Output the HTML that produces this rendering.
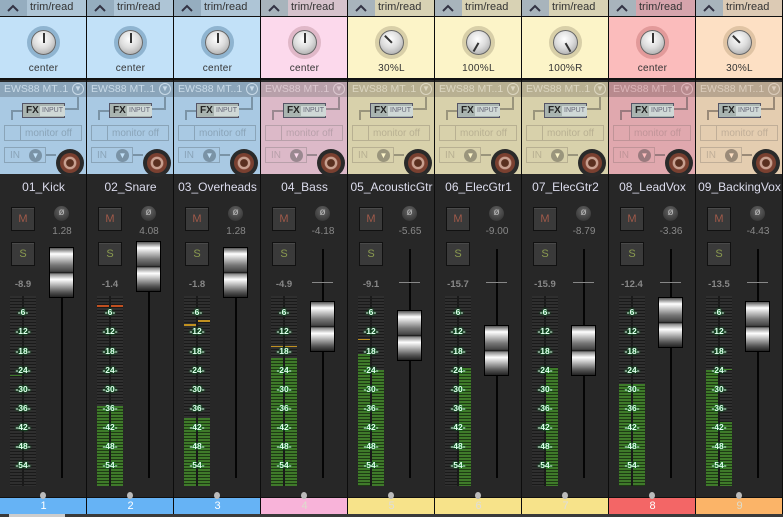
<!DOCTYPE html>
<html><head><meta charset="utf-8"><style>
*{margin:0;padding:0;box-sizing:border-box}
body{width:783px;height:517px;background:#222;overflow:hidden;position:relative;font-family:"Liberation Sans","DejaVu Sans",sans-serif}
.ch{position:absolute;top:0;width:87px;height:517px;background:#272727;border-right:1px solid #0c0c0c;overflow:hidden}
.tb{position:absolute;left:0;top:0;width:87px;height:17px;background:var(--tb);border-bottom:1px solid #111}
.ti{position:absolute;left:0;top:0;width:27px;height:16px;background:var(--ti)}
.tb span{position:absolute;left:30px;top:1px;font-size:11px;color:#333}
.pan{position:absolute;left:0;top:17px;width:87px;height:63px;background:var(--pan);border-bottom:2px solid #111}
.ring{position:absolute;left:27px;top:9px;width:33px;height:33px;border-radius:50%;border:4px solid var(--ring)}
.knob{position:absolute;left:31px;top:13px;width:25px;height:25px;border-radius:50%;background:radial-gradient(circle at 45% 35%,#fff,#ddd 45%,#999);border:1px solid #666}
.knob i{position:absolute;left:11px;top:2px;width:1.5px;height:10px;background:#333;transform-origin:50% 10px}
.pl{position:absolute;left:0;width:87px;top:46px;text-align:center;font-size:10px;color:#333;letter-spacing:.3px}
.rt{position:absolute;left:0;top:82px;width:87px;height:92px;background:var(--rt)}
.rh{position:absolute;left:0;top:0;width:87px;height:15px;background:var(--rh);color:var(--rht);font-size:10.5px;padding:1px 0 0 4px;white-space:nowrap}
.rh b{position:absolute;right:3px;top:1px;width:12px;height:12px;border-radius:50%;border:1.5px solid var(--rht);font-size:8px;line-height:10px;text-align:center;color:var(--rht)}
.fx{position:absolute;left:22px;top:21px;width:43px;height:15px;background:#a9b4b0;border:1px solid #556;font-size:10px;font-weight:bold;color:#222;padding-left:3px;line-height:13px}
.fx span{position:absolute;left:17px;top:2px;height:10px;padding:0 2px;background:#cfd8d6;font-size:7px;color:#667;font-weight:normal;line-height:10px}
.ar1{position:absolute;left:65px;top:15px;width:14px;height:13px;border-right:2px solid var(--ar);border-bottom:2px solid var(--ar)}
.ar2{position:absolute;left:11px;top:28px;width:11px;height:10px;border-left:2px solid var(--ar);border-top:2px solid var(--ar)}
.mo{position:absolute;left:4px;top:43px;width:78px;height:16px;border:1px solid var(--ln);color:var(--lt);font-size:10px;padding:1px 0 0 20px;line-height:13px}
.mo:before{content:"";position:absolute;left:15px;top:0;height:14px;border-left:1px solid var(--ln)}
.in{position:absolute;left:4px;top:65px;width:42px;height:16px;border:1px solid var(--ln);color:var(--lt);font-size:10px;padding:1px 0 0 5px;line-height:13px}
.in b{position:absolute;left:24px;top:1px;width:13px;height:13px;border-radius:50%;background:var(--ar);color:var(--pan);font-size:8px;line-height:13px;text-align:center}
.in2{position:absolute;left:46px;top:72px;width:10px;border-top:2px solid var(--ar)}
.rec{position:absolute;left:56px;top:67px;width:28px;height:28px;border-radius:50%;background:#2a2a2a}
.rec:after{content:"";position:absolute;left:4px;top:4px;width:20px;height:20px;border-radius:50%;background:radial-gradient(circle,#5a3020 25%,#c8a090 30%,#c8a090 42%,#7a4030 48%);}
.nm{position:absolute;left:0;top:180px;width:87px;text-align:center;font-size:12px;color:#dde;white-space:nowrap}
.m,.s{position:absolute;left:11px;width:24px;height:24px;background:#3a3a3a;border:1px solid #111;box-shadow:inset 0 1px 0 #4a4a4a;font-size:11px;text-align:center;line-height:22px}
.m{top:207px;color:#a05a4a}.s{top:242px;color:#8a9a50}
.ph{position:absolute;left:54px;top:206px;width:15px;height:15px;border-radius:50%;background:radial-gradient(circle at 50% 35%,#666,#2a2a2a);color:#bbb;font-size:10px;text-align:center;line-height:14px}
.vol{position:absolute;left:40px;top:226px;width:44px;text-align:center;font-size:10px;color:#888}
.pk{position:absolute;left:5px;top:279px;width:36px;text-align:center;font-size:9.5px;color:#888;font-weight:bold}
.mt{position:absolute;left:10px;top:296px;width:26px;height:190px;background:repeating-linear-gradient(#2f2f2f 0 2px,#1a1a1a 2px 3px)}
.mt:before{content:"";position:absolute;left:12px;top:0;height:190px;border-left:2px solid #1a1a1a;z-index:2}
.g{position:absolute;bottom:0;background:repeating-linear-gradient(#3f7a2a 0 2px,#1e3a14 2px 3px)}
.gl{left:0;width:12px}.gr{left:14px;width:12px}
.lb{position:absolute;left:5px;width:36px;text-align:center;font-size:8.5px;font-weight:bold;color:#e4fff0;text-shadow:0 0 2px #0a3,0 0 1px #000;z-index:3}
.trk{position:absolute;left:61px;top:249px;height:229px;border-left:2px solid #050505}
.zd{position:absolute;left:51px;top:282px;width:21px;border-top:1px solid #888}
.th{position:absolute;left:49px;width:25px;height:51px;border:1px solid #000;background:linear-gradient(#555,#fff 12%,#ddd 18%,#777 35%,#444 48%,#111 50%,#888 53%,#fff 64%,#ccc 72%,#555 90%,#222)}
.ft{position:absolute;left:0;top:497px;width:87px;height:17px;background:var(--bt);text-align:center;color:var(--bn);font-size:11px;line-height:17px;border-top:1px solid #111}
.dot{position:absolute;left:40px;top:492px;width:6px;height:7px;border-radius:50%;background:#bbb;z-index:2}
.bb{position:absolute;left:0;top:514px;width:783px;height:3px;background:#3a3a3a}
</style></head><body>

<div class="ch" style="left:0;--tb:#aec5d6;--ti:#95adbf;--pan:#c2e1f8;--ring:#8fb4d0;--rt:#a9c9e3;--rh:#8ba5ba;--rht:#c8dae8;--ar:#7a93a6;--ln:#8aa4b8;--lt:#8aa4b8;--bt:#66b3f5;--bn:#fff">
<div class="tb"><div class="ti"><svg width="27" height="16"><path d="M8 11l5-5 5 5" stroke="#334" stroke-width="2" fill="none"/></svg></div><span>trim/read</span></div>
<div class="pan"><div class="ring"></div><div class="knob"><i></i></div><div class="pl">center</div></div>
<div class="rt"><div class="rh">EWS88 MT..1<b>▼</b></div><div class="ar1"></div><div class="ar2"></div><div class="fx">FX<span>INPUT</span></div><div class="mo">monitor off</div><div class="in">IN<b>▼</b></div><div class="in2"></div><div class="rec"></div></div>
<div class="nm">01_Kick</div><div class="m">M</div><div class="ph">ø</div><div class="vol">1.28</div><div class="s">S</div><div class="pk">-8.9</div>
<div class="mt"><div class="g gl" style="height:1px;bottom:110px"></div></div>
<div class="lb" style="top:307px">-6-</div><div class="lb" style="top:326px">-12-</div><div class="lb" style="top:346px">-18-</div><div class="lb" style="top:365px">-24-</div><div class="lb" style="top:384px">-30-</div><div class="lb" style="top:403px">-36-</div><div class="lb" style="top:422px">-42-</div><div class="lb" style="top:441px">-48-</div><div class="lb" style="top:460px">-54-</div>
<div class="trk"></div><div class="th" style="top:247px"></div><div class="dot"></div><div class="ft">1</div></div>

<div class="ch" style="left:87px;--tb:#aec5d6;--ti:#95adbf;--pan:#c2e1f8;--ring:#8fb4d0;--rt:#a9c9e3;--rh:#8ba5ba;--rht:#c8dae8;--ar:#7a93a6;--ln:#8aa4b8;--lt:#8aa4b8;--bt:#66b3f5;--bn:#fff">
<div class="tb"><div class="ti"><svg width="27" height="16"><path d="M8 11l5-5 5 5" stroke="#334" stroke-width="2" fill="none"/></svg></div><span>trim/read</span></div>
<div class="pan"><div class="ring"></div><div class="knob"><i></i></div><div class="pl">center</div></div>
<div class="rt"><div class="rh">EWS88 MT..1<b>▼</b></div><div class="ar1"></div><div class="ar2"></div><div class="fx">FX<span>INPUT</span></div><div class="mo">monitor off</div><div class="in">IN<b>▼</b></div><div class="in2"></div><div class="rec"></div></div>
<div class="nm">02_Snare</div><div class="m">M</div><div class="ph">ø</div><div class="vol">4.08</div><div class="s">S</div><div class="pk">-1.4</div>
<div class="mt"><div class="g gl" style="height:80px"></div><div class="g gr" style="height:80px"></div><div style="position:absolute;left:0;top:9px;width:26px;border-top:2px solid #c05020"></div></div>
<div class="lb" style="top:307px">-6-</div><div class="lb" style="top:326px">-12-</div><div class="lb" style="top:346px">-18-</div><div class="lb" style="top:365px">-24-</div><div class="lb" style="top:384px">-30-</div><div class="lb" style="top:403px">-36-</div><div class="lb" style="top:422px">-42-</div><div class="lb" style="top:441px">-48-</div><div class="lb" style="top:460px">-54-</div>
<div class="trk"></div><div class="th" style="top:241px"></div><div class="dot"></div><div class="ft">2</div></div>

<div class="ch" style="left:174px;--tb:#aec5d6;--ti:#95adbf;--pan:#c2e1f8;--ring:#8fb4d0;--rt:#a9c9e3;--rh:#8ba5ba;--rht:#c8dae8;--ar:#7a93a6;--ln:#8aa4b8;--lt:#8aa4b8;--bt:#66b3f5;--bn:#fff">
<div class="tb"><div class="ti"><svg width="27" height="16"><path d="M8 11l5-5 5 5" stroke="#334" stroke-width="2" fill="none"/></svg></div><span>trim/read</span></div>
<div class="pan"><div class="ring"></div><div class="knob"><i></i></div><div class="pl">center</div></div>
<div class="rt"><div class="rh">EWS88 MT..1<b>▼</b></div><div class="ar1"></div><div class="ar2"></div><div class="fx">FX<span>INPUT</span></div><div class="mo">monitor off</div><div class="in">IN<b>▼</b></div><div class="in2"></div><div class="rec"></div></div>
<div class="nm">03_Overheads</div><div class="m">M</div><div class="ph">ø</div><div class="vol">1.28</div><div class="s">S</div><div class="pk">-1.8</div>
<div class="mt"><div class="g gl" style="height:68px"></div><div class="g gr" style="height:68px"></div><div style="position:absolute;left:0;top:28px;width:12px;border-top:2px solid #c09020"></div><div style="position:absolute;left:14px;top:24px;width:12px;border-top:2px solid #c09020"></div></div>
<div class="lb" style="top:307px">-6-</div><div class="lb" style="top:326px">-12-</div><div class="lb" style="top:346px">-18-</div><div class="lb" style="top:365px">-24-</div><div class="lb" style="top:384px">-30-</div><div class="lb" style="top:403px">-36-</div><div class="lb" style="top:422px">-42-</div><div class="lb" style="top:441px">-48-</div><div class="lb" style="top:460px">-54-</div>
<div class="trk"></div><div class="th" style="top:247px"></div><div class="dot"></div><div class="ft">3</div></div>

<div class="ch" style="left:261px;--tb:#d6c2cc;--ti:#a8b4bc;--pan:#fcd9ec;--ring:#e0b8c8;--rt:#dcb9c8;--rh:#b8a0aa;--rht:#dcc8d0;--ar:#9a8890;--ln:#b8a0aa;--lt:#b8a0aa;--bt:#f8b3d9;--bn:#ddc">
<div class="tb"><div class="ti"><svg width="27" height="16"><path d="M8 11l5-5 5 5" stroke="#334" stroke-width="2" fill="none"/></svg></div><span>trim/read</span></div>
<div class="pan"><div class="ring"></div><div class="knob"><i></i></div><div class="pl">center</div></div>
<div class="rt"><div class="rh">EWS88 MT..1<b>▼</b></div><div class="ar1"></div><div class="ar2"></div><div class="fx">FX<span>INPUT</span></div><div class="mo">monitor off</div><div class="in">IN<b>▼</b></div><div class="in2"></div><div class="rec"></div></div>
<div class="nm">04_Bass</div><div class="m">M</div><div class="ph">ø</div><div class="vol">-4.18</div><div class="s">S</div><div class="pk">-4.9</div>
<div class="mt"><div class="g gl" style="height:128px"></div><div class="g gr" style="height:128px"></div><div style="position:absolute;left:0;top:50px;width:26px;border-top:1px solid #c09020"></div></div>
<div class="lb" style="top:307px">-6-</div><div class="lb" style="top:326px">-12-</div><div class="lb" style="top:346px">-18-</div><div class="lb" style="top:365px">-24-</div><div class="lb" style="top:384px">-30-</div><div class="lb" style="top:403px">-36-</div><div class="lb" style="top:422px">-42-</div><div class="lb" style="top:441px">-48-</div><div class="lb" style="top:460px">-54-</div>
<div class="trk"></div><div class="zd"></div><div class="th" style="top:301px"></div><div class="dot"></div><div class="ft">4</div></div>

<div class="ch" style="left:348px;--tb:#d8d2b4;--ti:#a8b4bc;--pan:#fcf4c8;--ring:#d8cfa8;--rt:#d8d1ab;--rh:#b8b092;--rht:#dcd6c0;--ar:#9a957c;--ln:#b8b092;--lt:#b8b092;--bt:#f7e38a;--bn:#ddd">
<div class="tb"><div class="ti"><svg width="27" height="16"><path d="M8 11l5-5 5 5" stroke="#334" stroke-width="2" fill="none"/></svg></div><span>trim/read</span></div>
<div class="pan"><div class="ring"></div><div class="knob"><i style="transform:rotate(-45deg)"></i></div><div class="pl">30%L</div></div>
<div class="rt"><div class="rh">EWS88 MT..1<b>▼</b></div><div class="ar1"></div><div class="ar2"></div><div class="fx">FX<span>INPUT</span></div><div class="mo">monitor off</div><div class="in">IN<b>▼</b></div><div class="in2"></div><div class="rec"></div></div>
<div class="nm">05_AcousticGtr</div><div class="m">M</div><div class="ph">ø</div><div class="vol">-5.65</div><div class="s">S</div><div class="pk">-9.1</div>
<div class="mt"><div class="g gl" style="height:132px"></div><div class="g gr" style="height:116px"></div><div style="position:absolute;left:0;top:43px;width:12px;border-top:1px solid #c09020"></div></div>
<div class="lb" style="top:307px">-6-</div><div class="lb" style="top:326px">-12-</div><div class="lb" style="top:346px">-18-</div><div class="lb" style="top:365px">-24-</div><div class="lb" style="top:384px">-30-</div><div class="lb" style="top:403px">-36-</div><div class="lb" style="top:422px">-42-</div><div class="lb" style="top:441px">-48-</div><div class="lb" style="top:460px">-54-</div>
<div class="trk"></div><div class="zd"></div><div class="th" style="top:310px"></div><div class="dot"></div><div class="ft">5</div></div>

<div class="ch" style="left:435px;--tb:#d8d2b4;--ti:#a8b4bc;--pan:#fcf4c8;--ring:#d8cfa8;--rt:#d8d1ab;--rh:#b8b092;--rht:#dcd6c0;--ar:#9a957c;--ln:#b8b092;--lt:#b8b092;--bt:#f7e38a;--bn:#ddd">
<div class="tb"><div class="ti"><svg width="27" height="16"><path d="M8 11l5-5 5 5" stroke="#334" stroke-width="2" fill="none"/></svg></div><span>trim/read</span></div>
<div class="pan"><div class="ring"></div><div class="knob"><i style="transform:rotate(-150deg)"></i></div><div class="pl">100%L</div></div>
<div class="rt"><div class="rh">EWS88 MT..1<b>▼</b></div><div class="ar1"></div><div class="ar2"></div><div class="fx">FX<span>INPUT</span></div><div class="mo">monitor off</div><div class="in">IN<b>▼</b></div><div class="in2"></div><div class="rec"></div></div>
<div class="nm">06_ElecGtr1</div><div class="m">M</div><div class="ph">ø</div><div class="vol">-9.00</div><div class="s">S</div><div class="pk">-15.7</div>
<div class="mt"><div class="g gr" style="height:118px"></div></div>
<div class="lb" style="top:307px">-6-</div><div class="lb" style="top:326px">-12-</div><div class="lb" style="top:346px">-18-</div><div class="lb" style="top:365px">-24-</div><div class="lb" style="top:384px">-30-</div><div class="lb" style="top:403px">-36-</div><div class="lb" style="top:422px">-42-</div><div class="lb" style="top:441px">-48-</div><div class="lb" style="top:460px">-54-</div>
<div class="trk"></div><div class="zd"></div><div class="th" style="top:325px"></div><div class="dot"></div><div class="ft">6</div></div>

<div class="ch" style="left:522px;--tb:#d8d2b4;--ti:#a8b4bc;--pan:#fcf4c8;--ring:#d8cfa8;--rt:#d8d1ab;--rh:#b8b092;--rht:#dcd6c0;--ar:#9a957c;--ln:#b8b092;--lt:#b8b092;--bt:#f7e38a;--bn:#ddd">
<div class="tb"><div class="ti"><svg width="27" height="16"><path d="M8 11l5-5 5 5" stroke="#334" stroke-width="2" fill="none"/></svg></div><span>trim/read</span></div>
<div class="pan"><div class="ring"></div><div class="knob"><i style="transform:rotate(150deg)"></i></div><div class="pl">100%R</div></div>
<div class="rt"><div class="rh">EWS88 MT..1<b>▼</b></div><div class="ar1"></div><div class="ar2"></div><div class="fx">FX<span>INPUT</span></div><div class="mo">monitor off</div><div class="in">IN<b>▼</b></div><div class="in2"></div><div class="rec"></div></div>
<div class="nm">07_ElecGtr2</div><div class="m">M</div><div class="ph">ø</div><div class="vol">-8.79</div><div class="s">S</div><div class="pk">-15.9</div>
<div class="mt"><div class="g gr" style="height:118px"></div></div>
<div class="lb" style="top:307px">-6-</div><div class="lb" style="top:326px">-12-</div><div class="lb" style="top:346px">-18-</div><div class="lb" style="top:365px">-24-</div><div class="lb" style="top:384px">-30-</div><div class="lb" style="top:403px">-36-</div><div class="lb" style="top:422px">-42-</div><div class="lb" style="top:441px">-48-</div><div class="lb" style="top:460px">-54-</div>
<div class="trk"></div><div class="zd"></div><div class="th" style="top:325px"></div><div class="dot"></div><div class="ft">7</div></div>

<div class="ch" style="left:609px;--tb:#d6a4ac;--ti:#a8b4bc;--pan:#fbbcbc;--ring:#e29a9a;--rt:#e0a8ae;--rh:#b88a8e;--rht:#dcb4b8;--ar:#9a7a7e;--ln:#c09498;--lt:#c09498;--bt:#f36666;--bn:#fff">
<div class="tb"><div class="ti"><svg width="27" height="16"><path d="M8 11l5-5 5 5" stroke="#334" stroke-width="2" fill="none"/></svg></div><span>trim/read</span></div>
<div class="pan"><div class="ring"></div><div class="knob"><i></i></div><div class="pl">center</div></div>
<div class="rt"><div class="rh">EWS88 MT..1<b>▼</b></div><div class="ar1"></div><div class="ar2"></div><div class="fx">FX<span>INPUT</span></div><div class="mo">monitor off</div><div class="in">IN<b>▼</b></div><div class="in2"></div><div class="rec"></div></div>
<div class="nm">08_LeadVox</div><div class="m">M</div><div class="ph">ø</div><div class="vol">-3.36</div><div class="s">S</div><div class="pk">-12.4</div>
<div class="mt"><div class="g gl" style="height:102px"></div><div class="g gr" style="height:102px"></div></div>
<div class="lb" style="top:307px">-6-</div><div class="lb" style="top:326px">-12-</div><div class="lb" style="top:346px">-18-</div><div class="lb" style="top:365px">-24-</div><div class="lb" style="top:384px">-30-</div><div class="lb" style="top:403px">-36-</div><div class="lb" style="top:422px">-42-</div><div class="lb" style="top:441px">-48-</div><div class="lb" style="top:460px">-54-</div>
<div class="trk"></div><div class="zd"></div><div class="th" style="top:297px"></div><div class="dot"></div><div class="ft">8</div></div>

<div class="ch" style="left:696px;width:87px;--tb:#dccab4;--ti:#a8b4bc;--pan:#fde0c4;--ring:#e0c4a4;--rt:#e4cdb0;--rh:#b8a690;--rht:#dccdbc;--ar:#9a8a78;--ln:#c0ae98;--lt:#c0ae98;--bt:#fbb468;--bn:#ddc">
<div class="tb"><div class="ti"><svg width="27" height="16"><path d="M8 11l5-5 5 5" stroke="#334" stroke-width="2" fill="none"/></svg></div><span>trim/read</span></div>
<div class="pan"><div class="ring"></div><div class="knob"><i style="transform:rotate(-45deg)"></i></div><div class="pl">30%L</div></div>
<div class="rt"><div class="rh">EWS88 MT..1<b>▼</b></div><div class="ar1"></div><div class="ar2"></div><div class="fx">FX<span>INPUT</span></div><div class="mo">monitor off</div><div class="in">IN<b>▼</b></div><div class="in2"></div><div class="rec"></div></div>
<div class="nm">09_BackingVox</div><div class="m">M</div><div class="ph">ø</div><div class="vol">-4.43</div><div class="s">S</div><div class="pk">-13.5</div>
<div class="mt"><div class="g gl" style="height:116px"></div><div class="g gr" style="height:64px"></div><div style="position:absolute;left:14px;top:73px;width:12px;border-top:1px solid #4a8a30"></div></div>
<div class="lb" style="top:307px">-6-</div><div class="lb" style="top:326px">-12-</div><div class="lb" style="top:346px">-18-</div><div class="lb" style="top:365px">-24-</div><div class="lb" style="top:384px">-30-</div><div class="lb" style="top:403px">-36-</div><div class="lb" style="top:422px">-42-</div><div class="lb" style="top:441px">-48-</div><div class="lb" style="top:460px">-54-</div>
<div class="trk"></div><div class="zd"></div><div class="th" style="top:301px"></div><div class="dot"></div><div class="ft">9</div></div>

<div class="bb"><div style="position:absolute;left:9px;top:0;width:56px;height:3px;background:#ccc"></div></div>
</body></html>
